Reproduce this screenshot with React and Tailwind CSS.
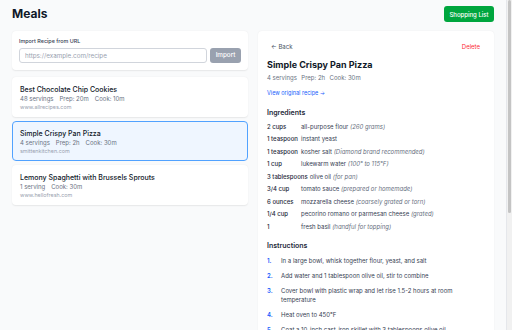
import React from 'react'

const recipes = [
  { id: 1, title: 'Best Chocolate Chip Cookies', meta: ['48 servings', 'Prep: 20m', 'Cook: 10m'], source: 'www.allrecipes.com' },
  { id: 2, title: 'Simple Crispy Pan Pizza', meta: ['4 servings', 'Prep: 2h', 'Cook: 30m'], source: 'smittenkitchen.com', active: true },
  { id: 3, title: 'Lemony Spaghetti with Brussels Sprouts', meta: ['1 serving', 'Cook: 30m'], source: 'www.hellofresh.com' },
]

const ingredients = [
  ['2 cups', 'all-purpose flour', '(260 grams)'],
  ['1 teaspoon', 'instant yeast', ''],
  ['1 teaspoon', 'kosher salt', '(Diamond brand recommended)'],
  ['1 cup', 'lukewarm water', '(100° to 115°F)'],
  ['3 tablespoons', 'olive oil', '(for pan)'],
  ['3/4 cup', 'tomato sauce', '(prepared or homemade)'],
  ['6 ounces', 'mozzarella cheese', '(coarsely grated or torn)'],
  ['1/4 cup', 'pecorino romano or parmesan cheese', '(grated)'],
  ['1', 'fresh basil', '(handful for topping)'],
]

const steps = [
  'In a large bowl, whisk together flour, yeast, and salt',
  'Add water and 1 tablespoon olive oil, stir to combine',
  'Cover bowl with plastic wrap and let rise 1.5-2 hours at room temperature',
  'Heat oven to 450°F',
  'Coat a 10-inch cast-iron skillet with 3 tablespoons olive oil',
]

const RecipeCard = ({ recipe }) => (
  <div
    className={`rounded-[4px] px-[7px] pt-[6.5px] pb-[6.5px] border ${
      recipe.active
        ? 'bg-blue-50 border-blue-400'
        : 'bg-white border-transparent shadow-[0_0.5px_1.5px_rgba(0,0,0,0.08)]'
    }`}
  >
    <div className="text-[7px] leading-[9px] font-medium text-gray-900">{recipe.title}</div>
    <div className="flex gap-[6px] mt-[1px] text-[6px] leading-[7.2px] text-gray-500">
      {recipe.meta.map((m) => (
        <span key={m}>{m}</span>
      ))}
    </div>
    <div className="mt-[1.8px] text-[5.4px] leading-[6px] text-gray-400">{recipe.source}</div>
  </div>
)

export default function App() {
  return (
    <div className="w-[512px] h-[330px] overflow-hidden flex bg-gray-50 font-['Inter',sans-serif]">
      <div className="flex-1 px-[12px]">
        {/* Header */}
        <div className="flex items-center justify-between pt-[6px] h-[22px] mb-[9px]">
          <h1 className="text-[12px] leading-[16px] font-bold text-gray-900">Meals</h1>
          <button className="h-[16px] w-[50px] rounded-[3px] bg-green-600 text-white text-[6px] font-medium">
            Shopping List
          </button>
        </div>

        <div className="grid grid-cols-2 gap-[10px]">
          {/* Left column */}
          <div>
            <div className="bg-white rounded-[4px] p-[7px] shadow-[0_0.5px_1.5px_rgba(0,0,0,0.08)] mb-[7px]">
              <label className="block text-[5.4px] leading-[7px] font-medium text-gray-700 mb-[3px]">
                Import Recipe from URL
              </label>
              <div className="flex gap-[3px]">
                <input
                  className="flex-1 h-[15px] min-w-0 border border-gray-300 rounded-[3px] px-[5px] text-[6.3px] text-gray-900 placeholder:text-gray-400 outline-none"
                  placeholder="https://example.com/recipe"
                />
                <button className="w-[31px] h-[15px] rounded-[3px] bg-gray-400 text-white text-[6.3px] font-medium">
                  Import
                </button>
              </div>
            </div>
            <div className="flex flex-col gap-[4px]">
              {recipes.map((r) => (
                <RecipeCard key={r.id} recipe={r} />
              ))}
            </div>
          </div>

          {/* Right panel */}
          <div className="bg-white rounded-[4px] px-[9px] pt-[9px] pb-[9px] shadow-[0_0.5px_1.5px_rgba(0,0,0,0.08)]">
            <div className="flex items-center justify-between h-[12px]">
              <button className="px-[4px] text-[6px] text-gray-600">← Back</button>
              <button className="px-[5px] text-[6px] text-red-500">Delete</button>
            </div>
            <h2 className="mt-[7px] text-[9px] leading-[12.6px] font-bold text-gray-900">Simple Crispy Pan Pizza</h2>
            <div className="flex gap-[4.5px] mt-[2.5px] text-[6px] leading-[8px] text-gray-500">
              <span>4 servings</span>
              <span>Prep: 2h</span>
              <span>Cook: 30m</span>
            </div>
            <a className="block mt-[7px] text-[5.5px] leading-[8px] text-blue-600">View original recipe →</a>

            <h3 className="mt-[10.5px] mb-[5px] text-[7px] leading-[9px] font-semibold text-gray-800">Ingredients</h3>
            <div className="flex flex-col gap-[3.5px]">
              {ingredients.map(([qty, name, note], i) => (
                <div key={i} className="flex text-[6px] leading-[9px]">
                  <span className="min-w-[32px] mr-[2px] font-medium text-gray-800">{qty}</span>
                  <span className="text-gray-700">
                    {name}
                    {note && <span className="italic text-gray-500"> {note}</span>}
                  </span>
                </div>
              ))}
            </div>

            <h3 className="mt-[10.3px] mb-[6px] text-[7px] leading-[9px] font-semibold text-gray-800">Instructions</h3>
            <ol className="flex flex-col gap-[5.7px]">
              {steps.map((s, i) => (
                <li key={i} className="flex text-[6px] leading-[9.3px]">
                  <span className="w-[14px] shrink-0 font-semibold text-blue-600">{i + 1}.</span>
                  <span className="text-gray-700 pr-[2px]">{s}</span>
                </li>
              ))}
            </ol>
          </div>
        </div>
      </div>

      {/* Window scrollbar */}
      <div className="w-[6px] bg-[#f1f1f1] border-l border-gray-200">
        <div className="mx-auto w-[3.5px] h-[213px] rounded-full bg-[#c4c4c4]" />
      </div>
    </div>
  )
}
